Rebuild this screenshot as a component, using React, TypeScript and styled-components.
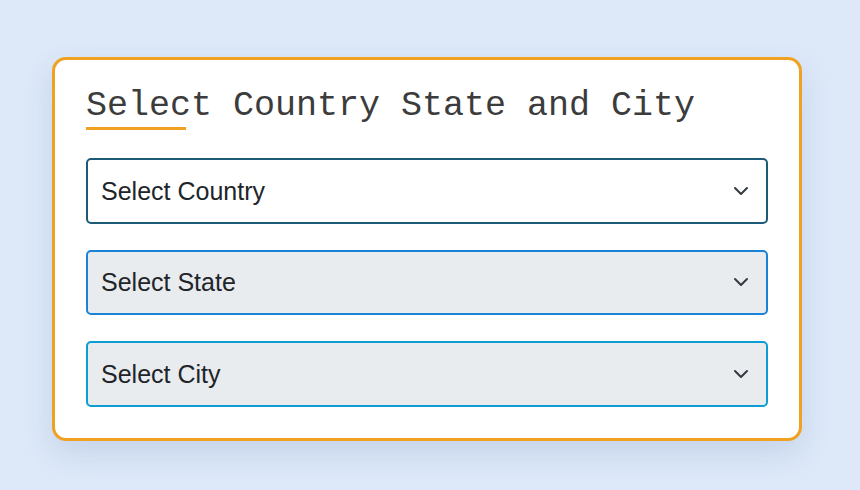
import React from "react";
import styled, { createGlobalStyle } from "styled-components";

const GlobalStyle = createGlobalStyle`
  html, body {
    margin: 0;
    padding: 0;
    background: #dde9f9;
  }
  body {
    font-family: "Liberation Sans", Arial, sans-serif;
  }
`;

const Page = styled.div`
  min-height: 490px;
  padding-top: 57px;
  padding-left: 52px;
  box-sizing: border-box;
`;

const Card = styled.div`
  width: 750px;
  box-sizing: border-box;
  background: #ffffff;
  border: 3px solid #f0a122;
  border-radius: 14px;
  padding: 26px 31px 31px;
  box-shadow: 0 12px 30px rgba(40, 70, 120, 0.13);
`;

const Title = styled.h1`
  margin: 0;
  font-family: "Liberation Mono", "Courier New", monospace;
  font-weight: 400;
  font-size: 35px;
  line-height: normal;
  color: #3c3c3c;
`;

const Underline = styled.div`
  width: 100px;
  height: 3px;
  background: #f0a122;
  margin-top: 1px;
  margin-bottom: 28px;
`;

const Fields = styled.div`
  display: flex;
  flex-direction: column;
  gap: 26px;
`;

const SelectWrap = styled.div`
  position: relative;
  height: 65.5px;
`;

const Select = styled.select<{ $border: string }>`
  appearance: none;
  -webkit-appearance: none;
  width: 100%;
  height: 100%;
  box-sizing: border-box;
  border: 2px solid ${(p) => p.$border};
  border-radius: 5px;
  padding: 0 50px 0 13px;
  font-family: "Liberation Sans", Arial, sans-serif;
  font-size: 25px;
  color: #212529;
  background: #ffffff;
  outline: none;
  opacity: 1;

  &:disabled {
    background: #e9ecef;
    color: #212529;
    opacity: 1;
  }
`;

const Chevron = styled.svg`
  position: absolute;
  right: 19px;
  top: 50%;
  transform: translateY(-50%);
  width: 16px;
  height: 16px;
  pointer-events: none;
`;

const fields = [
  { label: "Select Country", border: "#1d5a77", disabled: false },
  { label: "Select State", border: "#1b83d7", disabled: true },
  { label: "Select City", border: "#0d9dd3", disabled: true },
];

export default function App() {
  return (
    <>
      <GlobalStyle />
      <Page>
        <Card>
          <Title>Select Country State and City</Title>
          <Underline />
          <Fields>
            {fields.map((f) => (
              <SelectWrap key={f.label}>
                <Select $border={f.border} disabled={f.disabled} defaultValue="">
                  <option value="">{f.label}</option>
                </Select>
                <Chevron viewBox="0 0 16 16" fill="none">
                  <path
                    d="m2 5 6 6 6-6"
                    stroke="#343a40"
                    strokeWidth="2"
                    strokeLinecap="round"
                    strokeLinejoin="round"
                  />
                </Chevron>
              </SelectWrap>
            ))}
          </Fields>
        </Card>
      </Page>
    </>
  );
}
